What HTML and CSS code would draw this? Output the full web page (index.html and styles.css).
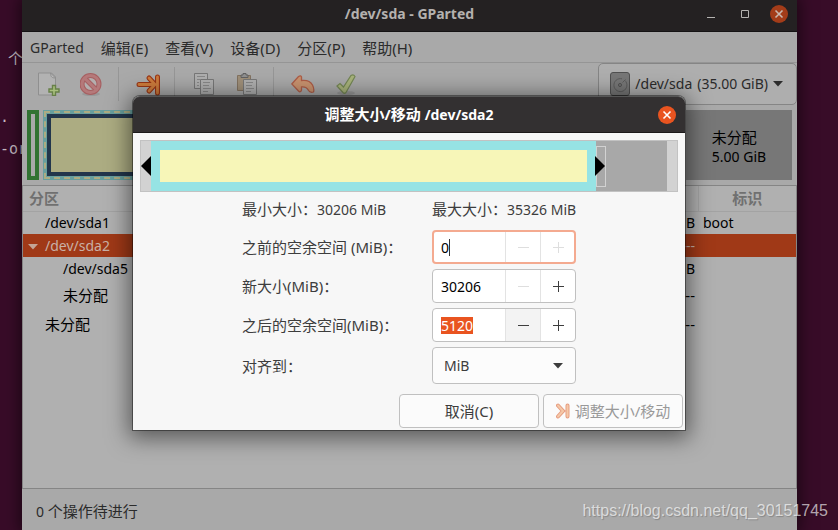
FILE: index.html
```html
<!DOCTYPE html>
<html lang="zh-CN">
<head>
<meta charset="utf-8">
<title>/dev/sda - GParted</title>
<link rel="stylesheet" href="styles.css">
</head>
<body>
<div class="desktop">
  <div class="terminal"><p class="term-cjk">个</p><p>.</p><p>-or</p></div>

  <main class="window">
    <header class="titlebar">
      <h1>/dev/sda - GParted</h1>
      <div class="controls">
        <button class="control" aria-label="最小化"><svg width="10" height="10" viewBox="0 0 10 10"><path d="M1 8.500h8" stroke="#b5b3b1"/></svg></button>
        <button class="control" aria-label="最大化"><svg width="10" height="10" viewBox="0 0 10 10"><path d="M1.500 1.500h7v7h-7z" fill="none" stroke="#b5b3b1"/></svg></button>
        <button class="control close dim" aria-label="关闭"><svg width="10" height="10" viewBox="0 0 10 10"><path d="M1.500 1.500l7 7M8.500 1.500l-7 7" stroke="currentColor" stroke-width="1.600"/></svg></button>
      </div>
    </header>

    <nav class="menubar">
      <a class="latin" href="#">GParted</a><a href="#">编辑(E)</a><a href="#">查看(V)</a><a href="#">设备(D)</a><a href="#">分区(P)</a><a href="#">帮助(H)</a>
    </nav>

    <div class="toolbar">
      <button class="tool" aria-label="新建"><svg width="24" height="24" viewBox="0 0 24 24"><path d="M1.500 1h13l4 4v18h-17z" fill="#b2b2b2" stroke="#8f8f8f"/><path d="M13.500 1c.5 2.500 0 5 5 5z" fill="#bcbcbc" stroke="#8f8f8f"/><path d="M15.500 13.500h3v3.500h3.500v3h-3.500v3.500h-3V20H12v-3h3.500z" fill="#a9c07e" stroke="#678048" stroke-width="1.400"/></svg></button>
      <button class="tool" aria-label="删除"><svg width="24" height="24" viewBox="0 0 24 24"><ellipse cx="11" cy="22" rx="9" ry="2" fill="#999"/><circle cx="10.500" cy="12" r="8.500" fill="#b4aeae" stroke="#a65f61" stroke-width="5"/><path d="M5 6.500l11 11" stroke="#a65f61" stroke-width="5"/><circle cx="10.500" cy="12" r="8.500" fill="none" stroke="#b5797a" stroke-width="3"/><path d="M5 6.500l11 11" stroke="#b5797a" stroke-width="3"/></svg></button>
      <span class="divider"></span>
      <button class="tool" aria-label="调整大小/移动"><svg width="24" height="24" viewBox="0 0 24 24"><path d="M3 12.500h14M13 6l6 6.500-6 6.500M21.500 5v16" fill="none" stroke="#983515" stroke-width="5" stroke-linecap="round"/><path d="M3 12.500h14M13 6l6 6.500-6 6.500M21.500 5v16" fill="none" stroke="#cc7b3c" stroke-width="2.800" stroke-linecap="round"/></svg></button>
      <span class="divider"></span>
      <button class="tool" aria-label="复制"><svg width="24" height="24" viewBox="0 0 24 24"><g fill="#afafaf" stroke="#777"><path d="M2.500 1.500h13v15h-13z"/><path d="M8.500 7.500h13v15h-13z"/></g><path d="M5 4.500h8M5 7.500h3M5 10.500h2M5 13.500h2M11 10.500h7M11 13.500h6M11 16.500h8M11 19.500h5" stroke="#888"/></svg></button>
      <button class="tool" aria-label="粘贴"><svg width="24" height="24" viewBox="0 0 24 24"><path d="M2.500 3.500h13v15h-13z" fill="#9f8f79" stroke="#827260"/><path d="M6 5.500V3h2V1.500h3V3h2v2.500z" fill="#909090" stroke="#606060"/><path d="M8.500 7.500h13v15h-13z" fill="#afafaf" stroke="#777"/><path d="M11 10.500h7M11 13.500h6M11 16.500h8M11 19.500h5" stroke="#888"/></svg></button>
      <span class="divider"></span>
      <button class="tool" aria-label="撤销"><svg width="24" height="24" viewBox="0 0 24 24"><path d="M.8 12L7.500 4.500q2.500-1.500 3 .5v3.500q8-1 11 4.500 2 4 1 7-3.500 1-5-1.500-2-4-7-3.500v3q-1 3-3 1z" fill="#c9936f" stroke="#ad5d47" stroke-width="1.300"/></svg></button>
      <button class="tool" aria-label="应用"><svg width="24" height="24" viewBox="0 0 24 24"><ellipse cx="12" cy="21" rx="9" ry="2" fill="#989898"/><path d="M3 14l3-2.500 3.500 3.500L17 3.500q2.500-1.500 4 1L12 20.500q-1.500 1.500-3 0z" fill="#a8b37b" stroke="#748654" stroke-width="1.200"/></svg></button>
      <button class="device">
        <svg width="20" height="24" viewBox="0 0 20 24"><rect x=".5" y=".5" width="19" height="23" rx="2.500" fill="#777" stroke="#505050"/><path d="M15 8.500A6.500 6.500 0 1 1 12 6.800" fill="none" stroke="#5b5b5b"/><circle cx="10" cy="13" r="1.500" fill="none" stroke="#505050"/><path d="M12.500 10.500l3-3" stroke="#5b5b5b"/></svg>
        <span>/dev/sda</span><span>(35.00 GiB)</span>
        <svg width="10" height="6" viewBox="0 0 10 6"><path d="M0 0h10L5 5.500z" fill="#2c2c2c"/></svg>
      </button>
    </div>

    <section class="disk">
      <div class="part-small"></div>
      <div class="part-extended"><div class="part-inner"></div></div>
      <div class="part-free"><p>未分配<br><span class="latin">5.00 GiB</span></p></div>
    </section>

    <section class="listing">
      <table>
        <thead><tr><th>分区</th><th></th><th class="flag-head">标识</th></tr></thead>
        <tbody>
          <tr><td>/dev/sda1</td><td class="size">B</td><td>boot</td></tr>
          <tr class="selected"><td><svg class="expander" width="10" height="6" viewBox="0 0 10 6"><path d="M0 0h10L5 5.500z" fill="#c4a596"/></svg>/dev/sda2</td><td class="size">---</td><td></td></tr>
          <tr><td class="child">/dev/sda5</td><td class="size">B</td><td></td></tr>
          <tr class="tall"><td class="child">未分配</td><td class="size">---</td><td></td></tr>
          <tr class="tall"><td>未分配</td><td class="size">---</td><td></td></tr>
        </tbody>
      </table>
    </section>

    <footer class="status"><span class="latin">0 </span>个操作待进行</footer>
  </main>

  <form class="dialog" role="dialog" aria-labelledby="dialog-title">
    <header class="dialog-title">
      <h2 id="dialog-title">调整大小/移动 <span class="latin">/dev/sda2</span></h2>
      <button type="button" class="control close" aria-label="关闭"><svg width="10" height="10" viewBox="0 0 10 10"><path d="M1.500 1.500l7 7M8.500 1.500l-7 7" stroke="currentColor" stroke-width="1.600"/></svg></button>
    </header>
    <div class="resizer">
      <div class="cap"><svg width="10" height="20" viewBox="0 0 10 20"><path d="M0 10L10 0v20z"/></svg></div>
      <div class="used"></div>
      <div class="after"><div class="grip"></div><svg class="grip-arrow" width="10" height="20" viewBox="0 0 10 20"><path d="M10 10L0 0v20z"/></svg></div>
      <div class="cap"></div>
    </div>
    <div class="fields">
      <p>最小大小：<span class="latin">30206 MiB</span></p>
      <p>最大大小：<span class="latin">35326 MiB</span></p>

      <label for="before">之前的空余空间 (MiB)：</label>
      <div class="spin focused">
        <div class="entry"><input id="before" class="caret" value="0"></div>
        <button type="button" disabled aria-label="减少"><svg width="12" height="12" viewBox="0 0 12 12"><path d="M1 6.500h11" stroke="currentColor"/></svg></button>
        <button type="button" disabled aria-label="增加"><svg width="12" height="12" viewBox="0 0 12 12"><path d="M1 6.500h11M6.500 1v11" stroke="currentColor"/></svg></button>
      </div>

      <label for="size">新大小(MiB)：</label>
      <div class="spin">
        <div class="entry"><input id="size" value="30206"></div>
        <button type="button" disabled aria-label="减少"><svg width="12" height="12" viewBox="0 0 12 12"><path d="M1 6.500h11" stroke="currentColor"/></svg></button>
        <button type="button" aria-label="增加"><svg width="12" height="12" viewBox="0 0 12 12"><path d="M1 6.500h11M6.500 1v11" stroke="currentColor"/></svg></button>
      </div>

      <label for="after">之后的空余空间(MiB)：</label>
      <div class="spin">
        <div class="entry"><input id="after" class="marked" value="5120"></div>
        <button type="button" class="hovered" aria-label="减少"><svg width="12" height="12" viewBox="0 0 12 12"><path d="M1 6.500h11" stroke="currentColor"/></svg></button>
        <button type="button" aria-label="增加"><svg width="12" height="12" viewBox="0 0 12 12"><path d="M1 6.500h11M6.500 1v11" stroke="currentColor"/></svg></button>
      </div>

      <label for="align">对齐到：</label>
      <div class="combo">
        <select id="align"><option>MiB</option></select>
        <svg width="10" height="6" viewBox="0 0 10 6"><path d="M0 0h10L5 5.500z" fill="#3d3d3d"/></svg>
      </div>
    </div>
    <div class="actions">
      <button type="button">取消(C)</button>
      <button type="submit" disabled><svg width="14" height="16" viewBox="0 0 14 16"><path d="M2 2.500l5 5.500-5 5.500M11.500 2.500v11" fill="none" stroke="#e69c80" stroke-width="4" stroke-linecap="round"/><path d="M2 2.500l5 5.500-5 5.500M11.500 2.500v11" fill="none" stroke="#f5c9a8" stroke-width="2" stroke-linecap="round"/></svg>调整大小/移动</button>
    </div>
  </form>

  <p class="watermark">https://blog.csdn.net/qq_30151745</p>
</div>
</body>
</html>
```
FILE: styles.css
```css
* { box-sizing: border-box; }

body, p, h1, h2 { margin: 0; }

body {
  background: #380c28;
  color: #2b2b2b;
  font: 15px/22px "Noto Sans", "Noto Sans CJK SC", sans-serif;
}

button, input, select {
  margin: 0;
  padding: 0;
  border: 0;
  background: none;
  color: inherit;
  font: inherit;
}

svg { display: block; flex: none; }

.latin { font-size: 14px; }

.desktop {
  position: relative;
  display: grid;
  grid-template-columns: 22px minmax(0, 1fr) 41px;
  min-height: 100vh;
  overflow: hidden;
}

.terminal {
  display: flex;
  flex-direction: column;
  gap: 10px;
  padding-top: 48px;
  white-space: nowrap;
  color: #c5bbc1;
  font: 15px/22px "DejaVu Sans Mono", "Noto Sans CJK SC", monospace;
}
.term-cjk { padding: 0 0 26px 8px; }

.window {
  position: relative;
  display: flex;
  flex-direction: column;
  background: #a9a9a9;
  box-shadow: 0 0 14px 3px rgba(0, 0, 0, 0.5);
}

.titlebar {
  display: grid;
  grid-template-columns: 1fr auto 1fr;
  align-items: center;
  height: 32px;
  padding: 0 9px 4px;
  border-bottom: 1px solid #151314;
  background: #242122;
}
.titlebar h1 {
  grid-column: 2;
  color: #b4b1af;
  font-size: 14px;
}
.controls {
  display: flex;
  gap: 16px;
  justify-content: flex-end;
}
.control {
  display: grid;
  place-items: center;
  width: 18px;
  height: 18px;
  border-radius: 50%;
}
.close { background: #e95420; color: #fff; }
.close.dim { background: #a33c19; color: #c9b8b0; }

.menubar {
  display: flex;
  gap: 17px;
  align-items: center;
  height: 31px;
  padding: 2px 8px 0;
  border-bottom: 1px solid #959595;
}
.menubar a { color: inherit; text-decoration: none; }

.toolbar {
  display: flex;
  align-items: center;
  height: 42px;
  padding-left: 5px;
}
.tool {
  display: grid;
  place-items: center;
  width: 43px;
  height: 42px;
}
.divider {
  width: 1px;
  height: 34px;
  margin: 0 7px 0 5px;
  background: #969696;
}
.device {
  display: flex;
  gap: 5px;
  align-items: center;
  height: 42px;
  margin-left: auto;
  padding: 0 13px 0 11px;
  border: 1px solid #858585;
  border-radius: 5px;
  background: #aeaeae;
  font-size: 14px;
}

.disk {
  display: flex;
  gap: 4px;
  height: 80px;
  padding: 5px;
}
.part-small {
  width: 12px;
  border: 4px solid #327332;
  background: #aaa;
}
.part-extended {
  flex: 1;
  padding: 4px;
  background: #689f9e;
  outline: 2px dashed #acac82;
  outline-offset: -3px;
}
.part-inner {
  height: 100%;
  border: 4px solid #22364c;
  background: #acac82;
}
.part-free {
  display: grid;
  place-items: center;
  width: 106px;
  padding-top: 3px;
  background: #777;
  color: #000;
  line-height: 19px;
}

.listing {
  flex: 1;
  border: 1px solid #858585;
  background: #b0b0b0;
}
table {
  width: 100%;
  border-collapse: collapse;
  table-layout: fixed;
  color: #000;
  font-size: 14px;
}
th {
  height: 25px;
  padding: 0 6px;
  border-bottom: 1px solid #a3a3a3;
  color: #707070;
  font-size: 15px;
  text-align: left;
}
th:nth-child(2) { width: 100px; }
th.flag-head {
  width: 98px;
  border-left: 1px solid #a3a3a3;
  text-align: center;
}
td {
  position: relative;
  height: 23px;
  padding: 0 0 0 22px;
}
td + td { padding: 0 0 0 5px; }
td.child { padding-left: 40px; }
td.size { padding: 0 3px 0 0; text-align: right; }
.tall td { height: 29px; font-size: 15px; }
.selected { background: #a03917; color: #c9b0a5; }
.expander { position: absolute; left: 5px; top: 10px; }

.status {
  height: 41px;
  padding: 11px 14px;
}

.dialog {
  position: absolute;
  top: 96px;
  left: calc(50% - 286px);
  width: 552px;
  border-radius: 7px 7px 0 0;
  background: #f7f7f7;
  color: #3d3d3d;
  box-shadow: 0 0 0 1px rgba(0, 0, 0, 0.4), 0 4px 22px 4px rgba(0, 0, 0, 0.5);
}
.dialog-title {
  display: grid;
  grid-template-columns: 1fr auto 1fr;
  align-items: center;
  height: 37px;
  padding: 0 9px;
  border-top: 1px solid #555;
  border-bottom: 1px solid #1c1a1a;
  border-radius: 7px 7px 0 0;
  background: #333031;
}
.dialog-title h2 {
  grid-column: 2;
  color: #fff;
  font-size: 15px;
}
.dialog-title .latin { font-size: 14px; }
.dialog-title .close { justify-self: end; }

.resizer {
  display: flex;
  height: 52px;
  margin: 7px 7px 0;
  border: 1px solid #c2c2c2;
}
.cap {
  display: grid;
  align-items: center;
  width: 10px;
  background: #d2d2d2;
}
.used {
  flex: 1;
  border: 9px solid #96e3e4;
  background: #f7f6b8;
}
.after {
  position: relative;
  display: flex;
  align-items: center;
  width: 71px;
  background: #a8a8a8;
}
.grip {
  width: 10px;
  height: 41px;
  border: 1px solid #d2d2d2;
}
.grip-arrow { position: absolute; left: -1px; }

.fields {
  display: grid;
  grid-template-columns: 190px 144px;
  row-gap: 5px;
  align-items: center;
  justify-content: center;
  padding-top: 5px;
}
.fields p {
  height: 28px;
  line-height: 25px;
  white-space: nowrap;
}
.spin, .combo {
  display: flex;
  overflow: hidden;
  height: 34px;
  border: 1px solid #c0c0c0;
  border-radius: 4px;
  background: #fff;
}
.spin.focused { border: 2px solid #f4aa90; }
.entry {
  display: flex;
  flex: 1;
  align-items: center;
  padding-left: 8px;
}
.focused .entry { padding-left: 7px; }
.entry input {
  field-sizing: content;
  height: 17px;
  color: #000;
  font-size: 14px;
  line-height: 17px;
}
.entry .marked { background: #e95420; color: #fff; }
.entry .caret { border-right: 1px solid #333; }
.spin button {
  display: grid;
  place-items: center;
  width: 35px;
  border-left: 1px solid #e3e3e3;
}
.spin button:disabled { color: #dedede; }
.focused button:last-child { width: 34px; }
.spin .hovered { background: #f3f3f3; }
.combo {
  position: relative;
  height: 37px;
  background: #fcfcfc;
}
.combo select {
  flex: 1;
  padding-left: 11px;
  appearance: none;
  font-size: 14px;
}
.combo svg {
  position: absolute;
  top: 15px;
  right: 12px;
  pointer-events: none;
}

.actions {
  display: flex;
  gap: 4px;
  justify-content: flex-end;
  padding: 10px 2px 2px;
}
.actions button {
  display: flex;
  gap: 5px;
  align-items: center;
  justify-content: center;
  width: 140px;
  height: 34px;
  border: 1px solid #c0c0c0;
  border-radius: 4px;
  background: #fbfbfb;
}
.actions button:disabled { color: #999; }

.watermark {
  position: absolute;
  right: 10px;
  bottom: 8px;
  color: rgba(255, 255, 255, 0.65);
  font: 16px/22px "Liberation Sans", sans-serif;
  text-shadow: 1px 1px 1px rgba(0, 0, 0, 0.2);
}
```
